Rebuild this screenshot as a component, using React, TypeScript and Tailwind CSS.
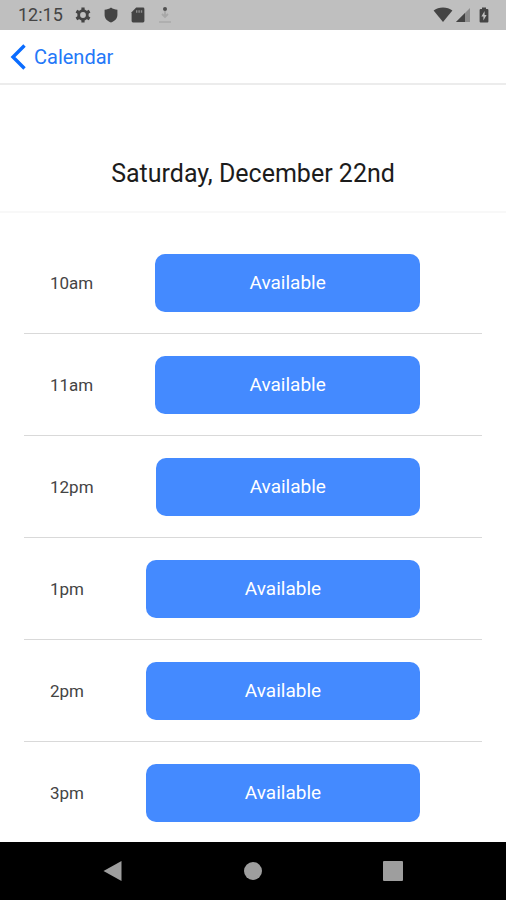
const slots = ["10am", "11am", "12pm", "1pm", "2pm", "3pm"]

const StatusBar = () => {
  return (
    <div className="flex h-[30px] items-center justify-between bg-[#bfbfbf] pl-[18px] pr-[17px] text-[#444444]">
      <div className="flex items-center">
        <span className="text-lg leading-[30px]">12:15</span>
        {/* Notification icons */}
        <div className="ml-3 flex items-center gap-[13px]">
          <svg width="16" height="16" viewBox="0 0 16 16" fill="none" stroke="currentColor">
            <circle cx="8" cy="8" r="4.3" strokeWidth="2.8" />
            <path
              d="M8 0.4V3M8 13V15.6M1.4 4.2L3.7 5.5M12.3 10.5L14.6 11.8M1.4 11.8L3.7 10.5M12.3 5.5L14.6 4.2"
              strokeWidth="3.2"
            />
          </svg>
          <svg width="14" height="16" viewBox="0 0 14 16" fill="currentColor">
            <path d="M7 0.5C8.8 1.9 11 2.6 13.4 2.8V8C13.4 11.6 10.5 14.3 7 15.6C3.5 14.3 0.6 11.6 0.6 8V2.8C3 2.6 5.2 1.9 7 0.5Z" />
          </svg>
          <svg width="14" height="16" viewBox="0 0 14 16">
            <path d="M5.2 0.5H12Q13.4 0.5 13.4 1.9V14Q13.4 15.4 12 15.4H2Q0.6 15.4 0.6 14V5.2Z" fill="#444444" />
            <path d="M5 3.2H6.4V5.8H5ZM7.4 3.2H8.8V5.8H7.4ZM9.8 3.2H11.2V5.8H9.8Z" fill="#8c8c8c" />
          </svg>
          <svg width="14" height="18" viewBox="0 0 14 18">
            <circle cx="7" cy="3" r="2" fill="#505050" />
            <path d="M7 5V11M4 8L7 11L10 8" fill="none" stroke="#a8a8a8" strokeWidth="1.8" />
            <path d="M1 16H13" stroke="#a8a8a8" strokeWidth="1.4" />
          </svg>
        </div>
      </div>
      {/* Signal and battery */}
      <div className="flex items-center">
        <svg width="20" height="16" viewBox="0 0 20 16" fill="currentColor">
          <path d="M10 15L0.6 3.4C3.2 1.4 6.4 0.4 10 0.4S16.8 1.4 19.4 3.4Z" />
        </svg>
        <svg className="ml-0.5" width="16" height="16" viewBox="0 0 16 16">
          <path d="M15 1V15H1Z" fill="#8c8c8c" />
          <path d="M10 6V15H1Z" fill="#444444" />
        </svg>
        <svg className="ml-2" width="10" height="16" viewBox="0 0 10 16">
          <path d="M3 0.5H7V2H8.4Q9.4 2 9.4 3V14.5Q9.4 15.5 8.4 15.5H1.6Q0.6 15.5 0.6 14.5V3Q0.6 2 1.6 2H3Z" fill="#444444" />
          <path d="M5.6 4L2.4 9.4H4.4V13.4L7.6 8H5.6Z" fill="#bfbfbf" />
        </svg>
      </div>
    </div>
  )
}

const Header = () => {
  return (
    <header className="flex h-[55px] items-center border-b-2 border-[#ececec] pl-[10px]">
      <a href="#calendar" className="flex items-center gap-2 text-xl leading-6 text-[#2478f8]">
        <svg width="16" height="26" viewBox="0 0 16 26" fill="none">
          <path d="M14.5 1.5L3 13L14.5 24.5" stroke="#0a6cff" strokeWidth="3.4" />
        </svg>
        Calendar
      </a>
    </header>
  )
}

const NavigationBar = () => {
  return (
    <nav className="flex h-[58px] items-center justify-center gap-[100px] bg-black">
      <button type="button" aria-label="Back" className="flex h-10 w-10 items-center justify-center">
        <svg width="20" height="22" viewBox="0 0 20 22">
          <path d="M18.5 1V21L0.5 11Z" fill="#9e9e9e" />
        </svg>
      </button>
      <button type="button" aria-label="Home" className="flex h-10 w-10 items-center justify-center">
        <span className="h-[18px] w-[18px] rounded-full bg-[#9e9e9e]" />
      </button>
      <button type="button" aria-label="Recent apps" className="flex h-10 w-10 items-center justify-center">
        <span className="h-5 w-5 rounded-[1px] bg-[#9e9e9e]" />
      </button>
    </nav>
  )
}

const App = () => {
  return (
    <div className="flex min-h-screen flex-col bg-white font-['Roboto',sans-serif]">
      <StatusBar />
      <Header />
      <main className="flex-1">
        <div className="border-b-2 border-[#f8f8f8] pt-[73px] pb-[21px]">
          <h1 className="text-center text-[25px] leading-8 text-[#1c1c1c]">Saturday, December 22nd</h1>
        </div>
        <ul className="px-6 pt-[19px]">
          {slots.map((slot) => (
            <li
              key={slot}
              className="flex items-center gap-[62px] border-b border-[#d9d9d9] pt-[22px] pr-[62px] pb-[21px] pl-[26px] last:border-b-0 last:pb-5"
            >
              <span id={slot} className="text-[17px] leading-6 text-[#444444]">{slot}</span>
              <button
                type="button"
                aria-describedby={slot}
                className="h-[58px] flex-1 rounded-[10px] bg-[#448aff] text-[19px] leading-6 text-white"
              >
                Available
              </button>
            </li>
          ))}
        </ul>
      </main>
      <NavigationBar />
    </div>
  )
}

export default App
